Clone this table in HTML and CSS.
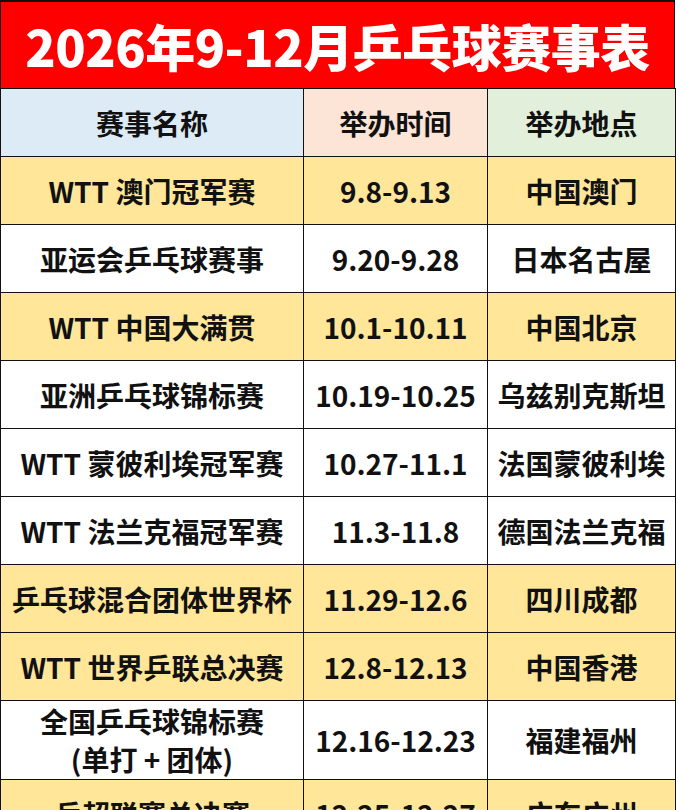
FILE: index.html
```html
<!DOCTYPE html>
<html lang="zh-CN">
<head>
<meta charset="utf-8">
<title>2026年9-12月乒乓球赛事表</title>
<link rel="stylesheet" href="styles.css">
</head>
<body>
<div class="sheet">
  <div class="title">2026年9-12月乒乓球赛事表</div>
  <table class="grid">
    <colgroup>
      <col class="c1">
      <col class="c2">
      <col class="c3">
    </colgroup>
    <thead>
      <tr class="head">
        <th class="h1">赛事名称</th>
        <th class="h2">举办时间</th>
        <th class="h3">举办地点</th>
      </tr>
    </thead>
    <tbody>
      <tr class="y"><td>WTT 澳门冠军赛</td><td>9.8-9.13</td><td>中国澳门</td></tr>
      <tr class="w"><td>亚运会乒乓球赛事</td><td>9.20-9.28</td><td>日本名古屋</td></tr>
      <tr class="y"><td>WTT 中国大满贯</td><td>10.1-10.11</td><td>中国北京</td></tr>
      <tr class="w"><td>亚洲乒乓球锦标赛</td><td>10.19-10.25</td><td>乌兹别克斯坦</td></tr>
      <tr class="w"><td>WTT 蒙彼利埃冠军赛</td><td>10.27-11.1</td><td>法国蒙彼利埃</td></tr>
      <tr class="w"><td>WTT 法兰克福冠军赛</td><td>11.3-11.8</td><td>德国法兰克福</td></tr>
      <tr class="y"><td>乒乓球混合团体世界杯</td><td>11.29-12.6</td><td>四川成都</td></tr>
      <tr class="y"><td>WTT 世界乒联总决赛</td><td>12.8-12.13</td><td>中国香港</td></tr>
      <tr class="w tall"><td><span class="line">全国乒乓球锦标赛</span><span class="line">(单打 + 团体)</span></td><td>12.16-12.23</td><td>福建福州</td></tr>
      <tr class="y"><td>乒超联赛总决赛</td><td>12.25-12.27</td><td>广东广州</td></tr>
    </tbody>
  </table>
</div>
</body>
</html>
```
FILE: styles.css
```css
html, body {
  margin: 0;
  padding: 0;
  background: #ffffff;
}
body {
  width: 676px;
  height: 810px;
  overflow: hidden;
  font-family: "Noto Sans CJK SC", "Noto Sans", sans-serif;
  color: #111111;
}
.sheet {
  width: 675px;
  border-top: 2px solid #111;
}
.title {
  height: 86px;
  background: #ff0000;
  color: #ffffff;
  font-size: 50px;
  font-weight: 900;
  line-height: 86px;
  text-align: center;
  border-left: 1px solid #111;
  border-right: 1px solid #111;
  letter-spacing: -0.5px;
}
.grid {
  width: 675px;
  border-collapse: collapse;
  table-layout: fixed;
}
.c1 { width: 303px; }
.c2 { width: 184px; }
.c3 { width: 188px; }
.grid th,
.grid td {
  border: 1px solid #111;
  text-align: center;
  vertical-align: middle;
  font-size: 28px;
  font-weight: 700;
  padding: 0;
  white-space: nowrap;
  line-height: 38px;
}
.head th { height: 67px; }
.h1 { background: #ddebf7; }
.h2 { background: #fce4d6; }
.h3 { background: #e2efda; }
.grid tbody tr td { height: 67px; }
.y td { background: #ffe699; }
.w td { background: #ffffff; }
.grid tbody tr.tall td { height: 78px; }
.line { display: block; }
```
